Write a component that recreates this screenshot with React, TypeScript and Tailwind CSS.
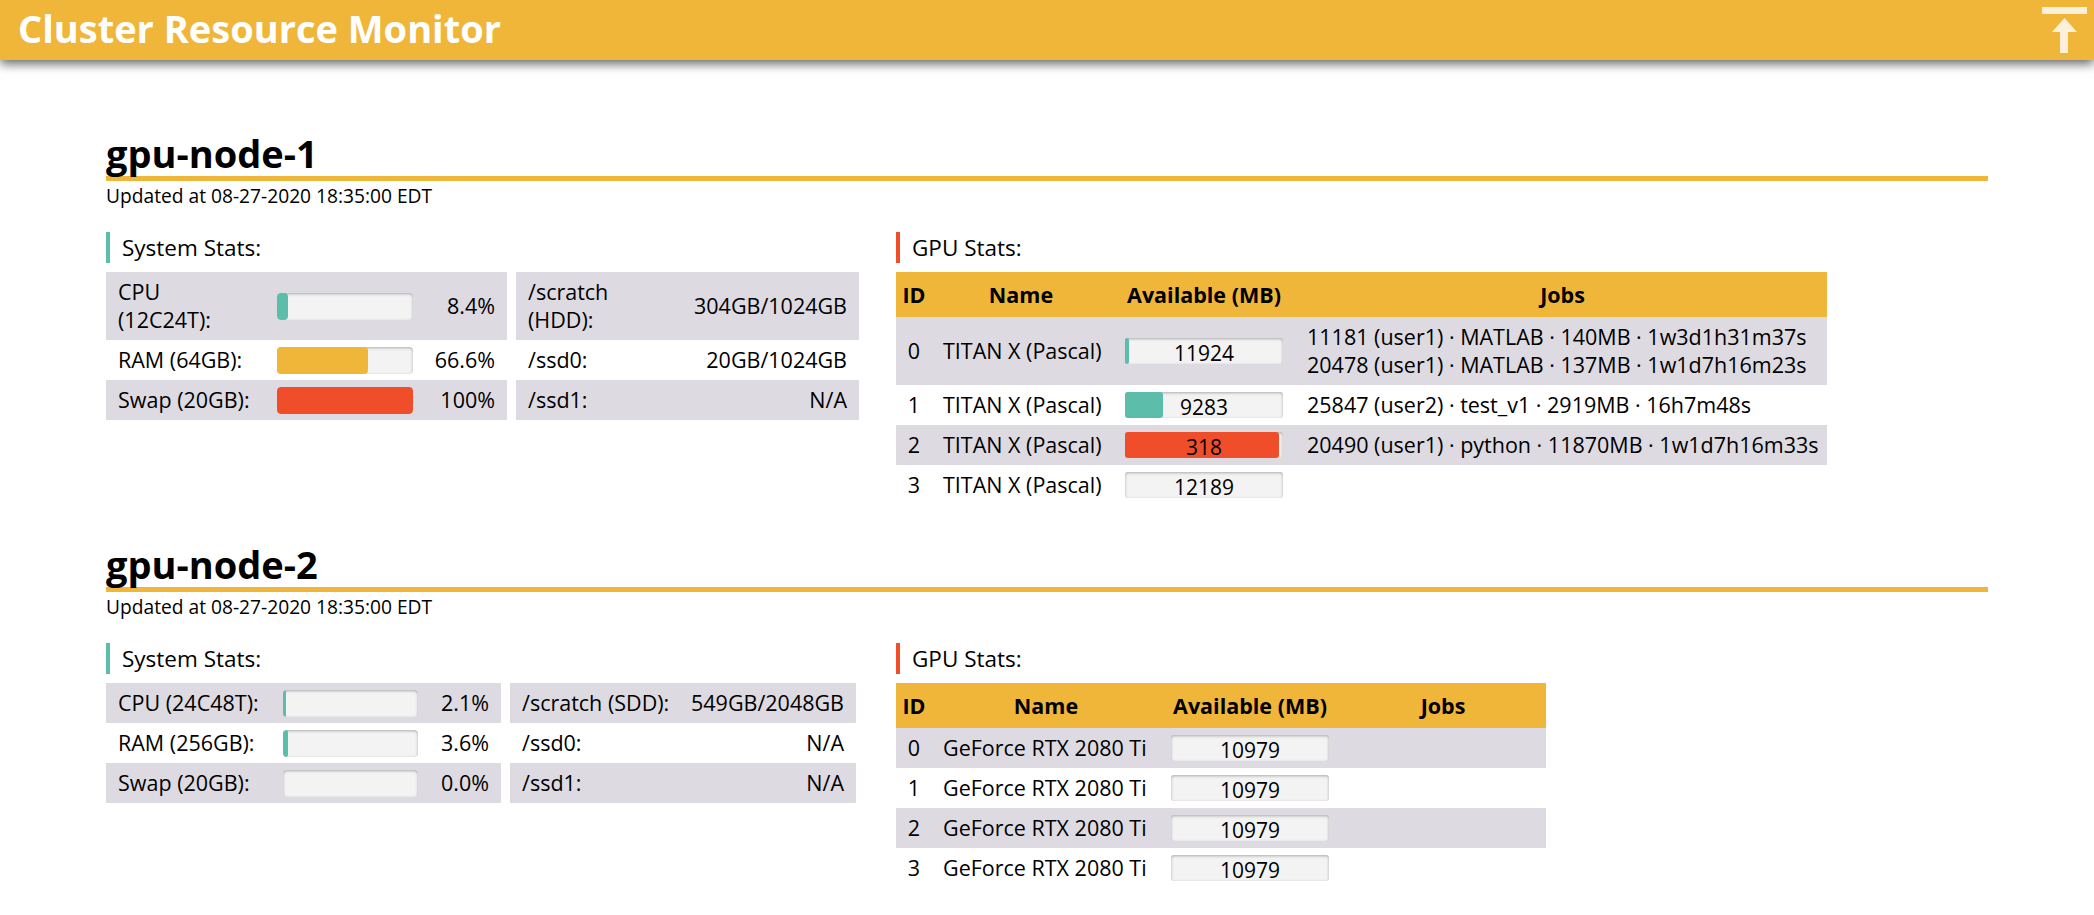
import React from "react";

type SysRow = { label: string; pct: number; text: string };
type DiskRow = { label: string; value: string };
type Gpu = { id: number; name: string; total: number; avail: number; jobs: string[] };

type Node = {
  name: string;
  updated: string;
  sys: SysRow[];
  disks: DiskRow[];
  gpus: Gpu[];
  sysTable: string;
  sysLabel: string;
  sysBar: string;
  diskTable: string;
  gpuTable: string;
  cols: [string, string, string, string];
};

const nodes: Node[] = [
  {
    name: "gpu-node-1",
    updated: "08-27-2020 18:35:00 EDT",
    sys: [
      { label: "CPU\n(12C24T):", pct: 8.4, text: "8.4%" },
      { label: "RAM (64GB):", pct: 66.6, text: "66.6%" },
      { label: "Swap (20GB):", pct: 100, text: "100%" },
    ],
    disks: [
      { label: "/scratch\n(HDD):", value: "304GB/1024GB" },
      { label: "/ssd0:", value: "20GB/1024GB" },
      { label: "/ssd1:", value: "N/A" },
    ],
    gpus: [
      {
        id: 0,
        name: "TITAN X (Pascal)",
        total: 12196,
        avail: 11924,
        jobs: [
          "11181 (user1) · MATLAB · 140MB · 1w3d1h31m37s",
          "20478 (user1) · MATLAB · 137MB · 1w1d7h16m23s",
        ],
      },
      { id: 1, name: "TITAN X (Pascal)", total: 12196, avail: 9283, jobs: ["25847 (user2) · test_v1 · 2919MB · 16h7m48s"] },
      { id: 2, name: "TITAN X (Pascal)", total: 12196, avail: 318, jobs: ["20490 (user1) · python · 11870MB · 1w1d7h16m33s"] },
      { id: 3, name: "TITAN X (Pascal)", total: 12196, avail: 12189, jobs: [] },
    ],
    sysTable: "w-[401px]",
    sysLabel: "w-[159px]",
    sysBar: "w-[136px]",
    diskTable: "w-[343px]",
    gpuTable: "w-[931px]",
    cols: ["w-[36px]", "w-[178px]", "w-[188px]", "w-[529px]"],
  },
  {
    name: "gpu-node-2",
    updated: "08-27-2020 18:35:00 EDT",
    sys: [
      { label: "CPU (24C48T):", pct: 2.1, text: "2.1%" },
      { label: "RAM (256GB):", pct: 3.6, text: "3.6%" },
      { label: "Swap (20GB):", pct: 0, text: "0.0%" },
    ],
    disks: [
      { label: "/scratch (SDD):", value: "549GB/2048GB" },
      { label: "/ssd0:", value: "N/A" },
      { label: "/ssd1:", value: "N/A" },
    ],
    gpus: [0, 1, 2, 3].map((id) => ({ id, name: "GeForce RTX 2080 Ti", total: 11019, avail: 10979, jobs: [] })),
    sysTable: "w-[395px]",
    sysLabel: "w-[165px]",
    sysBar: "w-[135px]",
    diskTable: "w-[346px]",
    gpuTable: "w-[650px]",
    cols: ["w-[36px]", "w-[228px]", "w-[180px]", "w-[206px]"],
  },
];

function fillColor(pct: number) {
  if (pct < 50) return "bg-[#5dbdab]";
  if (pct < 90) return "bg-[#f0b63a]";
  return "bg-[#f04e2b]";
}

function StatLabel({ text, bar }: { text: string; bar: string }) {
  return (
    <div className={`border-l-4 ${bar} pl-3 text-[22.5px] leading-[31px]`}>{text}</div>
  );
}

function SystemStats({ node }: { node: Node }) {
  return (
    <div className="w-[790px]">
      <StatLabel text="System Stats:" bar="border-[#5dbdab]" />
      <div className="mt-[9px] flex gap-[9px] text-[21.5px] leading-[28px]">
        <div className={node.sysTable}>
          {node.sys.map((r, i) => (
            <div key={r.label} className={`flex items-center px-3 py-1.5 ${i % 2 === 0 ? "bg-[#dddae1]" : ""}`}>
              <div className={`${node.sysLabel} whitespace-pre-line`}>{r.label}</div>
              <div className={`${node.sysBar} flex h-[27px] overflow-hidden rounded-[4px] bg-[#f3f3f3] shadow-[inset_0_1px_3px_rgba(0,0,0,0.3)]`}>
                {r.pct > 0 && (
                  <div className={`h-full rounded-[4px] ${fillColor(r.pct)}`} style={{ width: `${r.pct}%` }} />
                )}
              </div>
              <div className="flex-1 text-right">{r.text}</div>
            </div>
          ))}
        </div>
        <div className={node.diskTable}>
          {node.disks.map((d, i) => (
            <div key={d.label} className={`flex items-center justify-between px-3 py-1.5 ${i % 2 === 0 ? "bg-[#dddae1]" : ""}`}>
              <div className="whitespace-pre-line">{d.label}</div>
              <div className="text-right">{d.value}</div>
            </div>
          ))}
        </div>
      </div>
    </div>
  );
}

function MemBar({ gpu }: { gpu: Gpu }) {
  const used = ((gpu.total - gpu.avail) / gpu.total) * 100;
  return (
    <div className="relative mx-auto h-[26px] w-[158px] rounded-[3px] bg-[#f3f3f3] shadow-[inset_0_1px_3px_rgba(0,0,0,0.3)]">
      {used >= 1 && (
        <div className={`absolute left-0 top-0 h-full rounded-[3px] ${fillColor(used)}`} style={{ width: `${used}%` }} />
      )}
      <div className="relative h-[26px] text-center text-[21px] leading-[31px]">{gpu.avail}</div>
    </div>
  );
}

function GpuStats({ node }: { node: Node }) {
  return (
    <div className="flex-1">
      <StatLabel text="GPU Stats:" bar="border-[#f04e2b]" />
      <table className={`mt-[9px] table-fixed border-collapse text-[21.5px] leading-[28px] ${node.gpuTable}`}>
        <thead>
          <tr className="h-[45px] bg-[#f0b63a] font-bold">
            <th className={`${node.cols[0]} text-center`}>ID</th>
            <th className={`${node.cols[1]} text-center`}>Name</th>
            <th className={`${node.cols[2]} text-center`}>Available (MB)</th>
            <th className={`${node.cols[3]} text-center`}>Jobs</th>
          </tr>
        </thead>
        <tbody>
          {node.gpus.map((g, i) => (
            <tr key={g.id} className={i % 2 === 0 ? "bg-[#dddae1]" : ""}>
              <td className="py-1.5 text-center">{g.id}</td>
              <td className="whitespace-nowrap py-1.5 pl-[11px]">{g.name}</td>
              <td className="py-1.5">
                <MemBar gpu={g} />
              </td>
              <td className="whitespace-nowrap py-1.5 pl-[9px]">
                {g.jobs.map((j) => (
                  <div key={j}>{j}</div>
                ))}
              </td>
            </tr>
          ))}
        </tbody>
      </table>
    </div>
  );
}

export default function App() {
  return (
    <div className="min-h-[915px] bg-white font-['Open_Sans',sans-serif] text-black">
      <header className="relative z-10 flex h-[60px] items-start justify-between bg-[#f0b63a] pl-[18px] pr-[7px] shadow-[0_4px_10px_rgba(0,0,0,0.6)]">
        <h1 className="text-[38px] font-bold leading-[57px] text-white">Cluster Resource Monitor</h1>
        <svg className="mt-[7px]" width="45" height="46" viewBox="0 0 45 46" fill="#fdf0da">
          <rect x="0" y="0" width="45" height="7" />
          <polygon points="22.5,11 35,25 10,25" />
          <rect x="18" y="25" width="8" height="21" />
        </svg>
      </header>
      <main className="flex flex-col gap-[37px] px-[106px] pt-[71px]">
        {nodes.map((node) => (
          <section key={node.name}>
            <h2 className="border-b-[5px] border-[#f0b63a] pb-px text-[38px] font-bold leading-[44px]">{node.name}</h2>
            <p className="mt-[2px] text-[19.2px] leading-[26px]">Updated at {node.updated}</p>
            <div className="mt-[23px] flex">
              <SystemStats node={node} />
              <GpuStats node={node} />
            </div>
          </section>
        ))}
      </main>
    </div>
  );
}
